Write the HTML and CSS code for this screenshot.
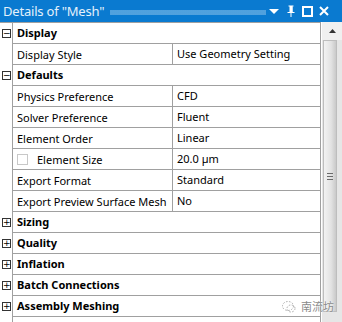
FILE: index.html
```html
<!DOCTYPE html>
<html lang="en">
<head>
    <meta charset="UTF-8">
    <title>Details of "Mesh"</title>
    <link rel="stylesheet" href="styles.css">
</head>
<body>
<div class="panel">

    <!-- Title bar -->
    <div class="titlebar">
        <span class="title">Details of "Mesh"</span>
        <span class="dots"></span>
        <div class="tools">
            <svg class="drop" width="10" height="6" viewBox="0 0 10 6"><path d="M0 0H10L5 5Z" fill="#fff"/></svg>
            <svg class="pin" width="8" height="12" viewBox="0 0 8 12"><path d="M1.5 0.5H6.5V1.5H5.5V7H7.5V8H4.5V12H3.5V8H0.5V7H2.5V1.5H1.5Z" fill="#fff"/><rect x="4.5" y="1.5" width="1" height="5.5" fill="#fff"/></svg>
            <svg class="max" width="11" height="11" viewBox="0 0 11 11"><rect x="1" y="1" width="9" height="9" fill="none" stroke="#fff" stroke-width="2"/></svg>
            <svg class="close" width="10" height="10" viewBox="0 0 10 10"><path d="M1 1L9 9M9 1L1 9" stroke="#fff" stroke-width="2"/></svg>
        </div>
    </div>

    <div class="body">
        <div class="grid">
            <div class="row">
                <span class="gutter"><span class="toggle">&minus;</span></span>
                <div class="cell head">Display</div>
            </div>
            <div class="row">
                <span class="gutter"></span>
                <div class="cell name">Display Style</div>
                <div class="cell value">Use Geometry Setting</div>
            </div>
            <div class="row">
                <span class="gutter"><span class="toggle">&minus;</span></span>
                <div class="cell head">Defaults</div>
            </div>
            <div class="row">
                <span class="gutter"></span>
                <div class="cell name">Physics Preference</div>
                <div class="cell value">CFD</div>
            </div>
            <div class="row">
                <span class="gutter"></span>
                <div class="cell name">Solver Preference</div>
                <div class="cell value">Fluent</div>
            </div>
            <div class="row">
                <span class="gutter"></span>
                <div class="cell name">Element Order</div>
                <div class="cell value">Linear</div>
            </div>
            <div class="row">
                <span class="gutter"></span>
                <div class="cell name"><span class="check"></span>Element Size</div>
                <div class="cell value">20.0 µm</div>
            </div>
            <div class="row">
                <span class="gutter"></span>
                <div class="cell name">Export Format</div>
                <div class="cell value">Standard</div>
            </div>
            <div class="row">
                <span class="gutter"></span>
                <div class="cell name">Export Preview Surface Mesh</div>
                <div class="cell value">No</div>
            </div>
            <div class="row">
                <span class="gutter"><span class="toggle">+</span></span>
                <div class="cell head">Sizing</div>
            </div>
            <div class="row">
                <span class="gutter"><span class="toggle">+</span></span>
                <div class="cell head">Quality</div>
            </div>
            <div class="row">
                <span class="gutter"><span class="toggle">+</span></span>
                <div class="cell head">Inflation</div>
            </div>
            <div class="row">
                <span class="gutter"><span class="toggle">+</span></span>
                <div class="cell head">Batch Connections</div>
            </div>
            <div class="row">
                <span class="gutter"><span class="toggle">+</span></span>
                <div class="cell head">Assembly Meshing</div>
            </div>
            <div class="row">
                <span class="gutter"></span>
                <div class="cell head"></div>
            </div>
        </div>

        <!-- Scrollbar -->
        <div class="scrollbar">
            <div class="arrow">
                <svg width="7" height="4" viewBox="0 0 7 4"><path d="M0 4H7L3.5 0Z" fill="#333"/></svg>
            </div>
            <div class="thumb"><span class="grip"></span></div>
        </div>
    </div>

    <!-- watermark -->
    <div class="watermark">
        <svg width="14" height="13" viewBox="0 0 14 13"><ellipse cx="6" cy="6" rx="5.5" ry="4.5" fill="none" stroke="#aaa" stroke-dasharray="1.5 1.5"/><ellipse cx="9" cy="8.5" rx="4" ry="3.5" fill="none" stroke="#aaa" stroke-dasharray="1.5 1.5"/></svg>
        <span>南流坊</span>
    </div>
</div>
</body>
</html>
```

FILE: styles.css
```css
body {
    margin: 0;
    background: #fff;
    font-family: "Noto Sans", "Open Sans", sans-serif;
}

.panel {
    position: relative;
    width: 342px;
    height: 322px;
    overflow: hidden;
    background: #fff;
}

/* Title bar */
.titlebar {
    height: 22px;
    background: #0a7ad0;
    display: flex;
    align-items: center;
    padding: 0 13px 0 3px;
}
.title {
    color: #e4f1fb;
    font-size: 13px;
    white-space: nowrap;
    letter-spacing: -0.2px;
}
.dots {
    flex: 1;
    height: 5px;
    margin: 2px 3px 0 6px;
    background-image: radial-gradient(circle, rgba(255,255,255,0.45) 0.6px, transparent 0.9px);
    background-size: 2px 2px;
}
.tools {
    display: flex;
    align-items: center;
}
.drop {
    margin-top: 2px;
}
.pin {
    margin-left: 8px;
}
.max {
    margin-left: 7px;
}
.close {
    margin-left: 6px;
}

/* Property grid */
.body {
    display: flex;
}
.grid {
    width: 321px;
    border-top: 1px solid #a0a0a0;
}
.row {
    display: flex;
    height: 21px;
}
.gutter {
    width: 12px;
    flex: none;
    display: flex;
    align-items: center;
    padding-left: 2px;
    box-sizing: border-box;
}
.toggle {
    width: 9px;
    height: 9px;
    box-sizing: border-box;
    border: 1px solid #333;
    font-family: "DejaVu Sans", sans-serif;
    font-size: 9px;
    line-height: 7px;
    text-align: center;
    color: #000;
}
.cell {
    box-sizing: border-box;
    height: 21px;
    border-bottom: 1px solid #a0a0a0;
    font-size: 11px;
    line-height: 19px;
    color: #000;
    white-space: nowrap;
    overflow: hidden;
    padding-left: 4px;
}
.head {
    width: 309px;
    border-left: 1px solid #a0a0a0;
    border-right: 1px solid #a0a0a0;
    font-weight: bold;
}
.name {
    width: 161px;
    border-left: 1px solid #a0a0a0;
    border-right: 1px solid #a0a0a0;
    display: flex;
    align-items: center;
}
.value {
    width: 148px;
    border-right: 1px solid #a0a0a0;
}
.check {
    width: 11px;
    height: 11px;
    box-sizing: border-box;
    border: 1px solid #c8c8c8;
    margin-right: 9px;
}

/* Scrollbar */
.scrollbar {
    width: 20px;
    margin-left: 1px;
    background: #e6e6e6;
    display: flex;
    flex-direction: column;
}
.arrow {
    height: 18px;
    background: #f0f0f0;
    display: flex;
    justify-content: center;
    align-items: center;
}
.thumb {
    width: 14px;
    height: 272px;
    margin-left: 1px;
    box-sizing: border-box;
    border: 1px solid #bdbdbd;
    background: linear-gradient(to right, #f2f2f2, #e2e2e2 60%, #c9c9c9);
    display: flex;
    justify-content: center;
    align-items: center;
}
.grip {
    width: 6px;
    height: 7px;
    background: repeating-linear-gradient(to bottom, #6a6a6a 0, #6a6a6a 1px, transparent 1px, transparent 3px);
}

.watermark {
    position: absolute;
    left: 282px;
    top: 298px;
    display: flex;
    align-items: center;
    gap: 5px;
    color: #8a8a8a;
    font-family: "Noto Sans CJK SC", sans-serif;
    font-size: 11px;
    text-shadow: 0 0 2px #fff;
}
```
